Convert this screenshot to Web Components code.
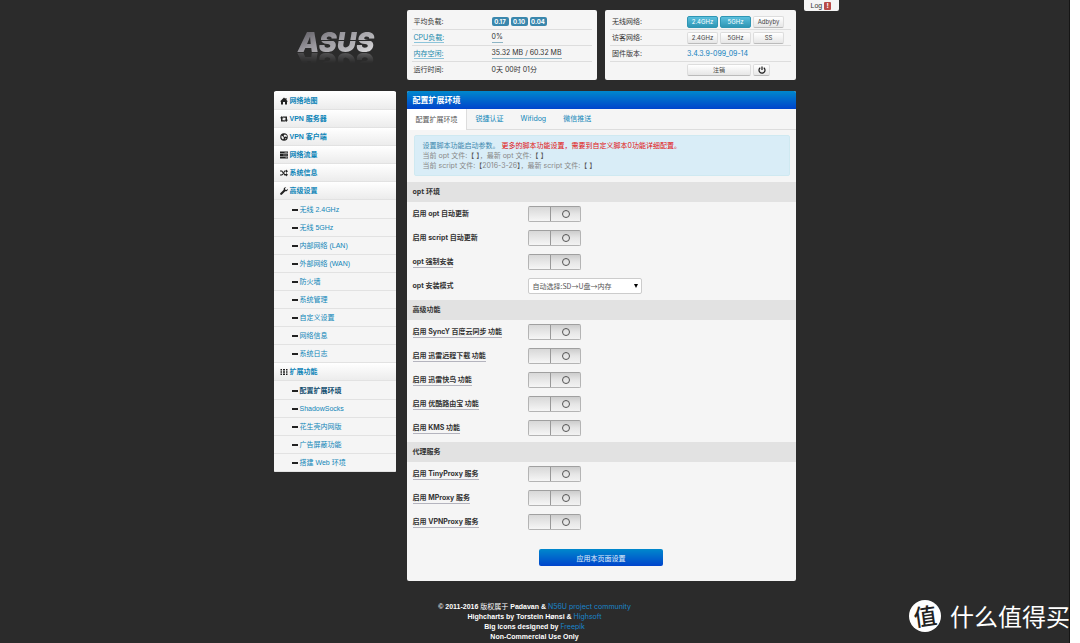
<!DOCTYPE html>
<html lang="zh-CN">
<head>
<meta charset="utf-8">
<title>ASUS Wireless Router - 配置扩展环境</title>
<style>
  html { background: #fff; }
  body { margin: 0; font: 7px/10px "Liberation Sans", "Noto Sans CJK SC", sans-serif; color: #333; }
</style>
</head>
<body>
<router-app></router-app>
<script>
const define = (name, html, setup) => customElements.define(name, class extends HTMLElement {
  connectedCallback() {
    if (this.shadowRoot) return;
    const t = document.createElement('template');
    t.innerHTML = html;
    this.attachShadow({ mode: 'open' }).append(t.content.cloneNode(true));
    if (setup) setup(this, this.shadowRoot);
  }
});

const ICONS = {
  home: '<path d="M8 1 0 9h2v6h4v-5h4v5h4V9h2l-3-3V2h-2v2z"/>',
  retweet: '<path d="M3.500 2 0 6.500h2V13h9L9 10.500H5v-4h2zM5 3h9v6.500h2L12.500 14 9 9.500h2v-4H7z"/>',
  globe: '<circle cx="8" cy="8" r="7.5"/><path fill="#f6f6f6" d="M9 3l4 1 1 4-3-1-2 1-2-2zM3 5l3 2 2 3-2 3-3-3zM10 11l3-1-2 3z"/>',
  tasks: '<path d="M0 1h16v4H0zM0 6h16v4H0zM0 11h16v4H0z"/><path fill="#ccc" d="M9 2.500h6v1H9zM6 7.500h9v1H6zM11 12.500h4v1h-4z"/>',
  random: '<path d="M0 3h4l6 7h2V8l4 3.500-4 3.500v-2H9L3 5H0zM0 11h3l2-2 1.500 2L4 13H0zM9 3h3V1l4 3.500L12 8V5h-2L8.500 8 7 6z"/>',
  wrench: '<path d="M15.500 3.500 13 6l-2.500-.5L10 3l2.500-2.500C9 0 6.500 2.500 7.500 5.500L.5 12.500c-1 2 1 4 3 3l7-7c3 1 5.500-1.500 5-5z"/>',
  th: '<path d="M1 2h3v3H1zM6 2h4v3H6zM12 2h3v3h-3zM1 6.500h3v3H1zM6 6.500h4v3H6zM12 6.500h3v3h-3zM1 11h3v3H1zM6 11h4v3H6zM12 11h3v3h-3z"/>',
  minus: '<path d="M2 6h12v4H2z"/>',
  power: '<path fill="none" stroke="#222" stroke-width="2.500" d="M4.500 3.500a6 6 0 1 0 7 0M8 1v7"/>'
};

define('ui-icon', `
  <style>:host{display:block;width:8px;height:8px;flex:none}svg{display:block;width:100%;height:100%;fill:#222}</style>
  <svg viewBox="0 0 16 16" aria-hidden="true"></svg>`,
  (el, root) => { root.querySelector('svg').innerHTML = ICONS[el.getAttribute('name')]; });

define('brand-logo', `
  <style>
    :host{display:block}
    svg{display:block;width:92px;height:44px;-webkit-box-reflect:below -27px linear-gradient(transparent 45%,rgba(0,0,0,.3) 69%,transparent 70%)}
    text{font:italic 900 27px Inter,sans-serif}
  </style>
  <svg viewBox="0 0 92 44" role="img" aria-label="ASUS">
    <defs><linearGradient id="m" x1="0" x2="1" y1="0" y2="1">
      <stop offset="0" stop-color="#4a484f"/><stop offset=".4" stop-color="#99979d"/>
      <stop offset=".65" stop-color="#b5b4b8"/><stop offset="1" stop-color="#f4f4f4"/>
    </linearGradient></defs>
    <text x="5" y="30" fill="url(#m)">ASUS</text>
    <path stroke="#2b2b2b" d="M23 18.500h62"/>
  </svg>`);

define('info-panel', `
  <style>
    :host{display:block;flex:1;box-sizing:border-box;padding:4px 5px 2px;border-radius:2px;background:#f5f5f5}
  </style><slot></slot>`);

define('info-row', `
  <style>
    :host{display:grid;grid-template-columns:78px 1fr;align-items:center;height:16px;box-sizing:border-box;
      padding-left:2px;border-bottom:1px solid #ddd;font-family:Inter,"Noto Sans CJK SC",sans-serif;font-size:7px}
    :host(:last-child){border-bottom-color:transparent}
    :host([narrow]){grid-template-columns:75px 1fr}
    div{display:flex;gap:2px}
    ::slotted(a){color:#0f7fbd;text-decoration:none}
    ::slotted(a.hint){color:#1689ac;border-bottom:1px solid #8cc4da}
    ::slotted(.dotted){border-bottom:1px solid #8cb4c4}
  </style>
  <span><slot name="label"></slot></span><div><slot></slot></div>`);

define('load-badge', `
  <style>:host{display:block;width:17px;border-radius:2px;background:#3a87ad;color:#fff;text-align:center;font:bold 6px/9px Inter,sans-serif}</style>
  <slot></slot>`);

define('ui-button', `
  <style>
    :host{display:block;width:31px}
    :host([wide]){width:64px}
    :host([small]){width:17px}
    button{display:flex;align-items:center;justify-content:center;box-sizing:border-box;width:100%;height:12px;padding:0;
      border:1px solid #ddd;border-bottom-color:#bbb;border-radius:2px;background:linear-gradient(#fff,#e6e6e6);
      color:#444;font:6px/10px Inter,"Noto Sans CJK SC",sans-serif;white-space:nowrap}
    :host([on]) button{border-color:#2f96b4;background:linear-gradient(#5bc0de,#2f96b4);color:#fff}
  </style>
  <button type="button"><slot></slot></button>`,
  (el, root) => { const l = el.getAttribute('label'); if (l) root.querySelector('button').setAttribute('aria-label', l); });

define('log-tab', `
  <style>
    :host{display:block;position:absolute;top:0;left:calc(100% + 8px)}
    button{display:flex;align-items:center;gap:2px;box-sizing:border-box;width:35px;height:11px;padding:0 0 0 7px;border:0;
      border-radius:0 0 2px 2px;background:#f5f5f5;color:#333;font:7px/9px "Liberation Sans",sans-serif}
    b{width:7px;border-radius:1px;background:#b94a48;color:#fff;line-height:8px}
  </style>
  <button type="button">Log <b>!</b></button>`);

define('nav-item', `
  <style>
    :host{display:block}
    a{display:flex;align-items:center;gap:2px;box-sizing:border-box;height:18px;padding-left:6px;
      border-bottom:1px solid #e2e2e2;background:linear-gradient(#fff,#ececec);
      color:#0f85b8;font-weight:bold;text-decoration:none}
    :host([sub]) a{padding-left:17px;gap:1px;background:#f5f5f5;font-weight:normal}
    :host([current]) a{color:#0f4c6e;font-weight:bold}
  </style>
  <a href="#"><ui-icon></ui-icon><span><slot></slot></span></a>`,
  (el, root) => {
    const icon = document.createElement('ui-icon');
    icon.setAttribute('name', el.getAttribute('icon') || 'minus');
    root.querySelector('ui-icon').replaceWith(icon);
  });

define('nav-group', `<style>:host{display:block;padding-top:1px;background:#f5f5f5}</style><slot></slot>`);

define('side-nav', `
  <style>:host{display:block;overflow:hidden;border-radius:2px}nav{padding-top:1px;background:#fff}</style>
  <nav>
    <nav-item icon="home">网络地图</nav-item>
    <nav-item icon="retweet">VPN 服务器</nav-item>
    <nav-item icon="globe">VPN 客户端</nav-item>
    <nav-item icon="tasks">网络流量</nav-item>
    <nav-item icon="random">系统信息</nav-item>
    <nav-item icon="wrench">高级设置</nav-item>
    <nav-group>
      <nav-item sub>无线 2.4GHz</nav-item>
      <nav-item sub>无线 5GHz</nav-item>
      <nav-item sub>内部网络 (LAN)</nav-item>
      <nav-item sub>外部网络 (WAN)</nav-item>
      <nav-item sub>防火墙</nav-item>
      <nav-item sub>系统管理</nav-item>
      <nav-item sub>自定义设置</nav-item>
      <nav-item sub>网络信息</nav-item>
      <nav-item sub>系统日志</nav-item>
    </nav-group>
    <nav-item icon="th">扩展功能</nav-item>
    <nav-group>
      <nav-item sub current>配置扩展环境</nav-item>
      <nav-item sub>ShadowSocks</nav-item>
      <nav-item sub>花生壳内网版</nav-item>
      <nav-item sub>广告屏蔽功能</nav-item>
      <nav-item sub>搭建 Web 环境</nav-item>
    </nav-group>
  </nav>`);

define('tab-bar', `
  <style>
    :host{display:flex;height:21px;box-sizing:border-box;border-bottom:1px solid #ddd}
    a{display:flex;align-items:center;padding:0 8px 0 9px;color:#0f85b8;text-decoration:none;font-family:Inter,"Noto Sans CJK SC",sans-serif}
    a[aria-current]{margin-bottom:-1px;border-right:1px solid #ddd;background:#fff;color:#555}
  </style>
  <a href="#" aria-current="page">配置扩展环境</a><a href="#">锐捷认证</a><a href="#">Wifidog</a><a href="#">微信推送</a>`);

define('info-alert', `
  <style>
    :host{display:block;margin:5px 6px 6px 7px;padding:5px 8px 4px;border:1px solid #cfe9f1;border-radius:2px;background:#d9edf7;
      color:#3a87ad;font-family:Inter,"Noto Sans CJK SC",sans-serif}
    p{margin:0}.more{color:#e01010}.file{color:#888}.file b{color:#555;font-weight:normal}
  </style>
  <p>设置脚本功能启动参数。 <span class="more">更多的脚本功能设置，需要到自定义脚本0功能详细配置。</span></p>
  <p class="file">当前 opt 文件:<b>【 】</b>，最新 opt 文件:<b>【 】</b></p>
  <p class="file">当前 script 文件:<b>【</b>2016-3-26<b>】</b>，最新 script 文件:<b>【 】</b></p>`);

define('form-section', `
  <style>
    :host{display:block;padding-bottom:2px}
    h2{margin:0;padding-left:6px;background:#e2e2e2;color:#333;font:bold 7px/20px "Open Sans","Noto Sans CJK SC",sans-serif}
  </style>
  <h2></h2><slot></slot>`,
  (el, root) => { root.querySelector('h2').textContent = el.getAttribute('heading'); });

const ROW = `
    :host{display:grid;grid-template-columns:115px 1fr;align-items:center;height:24px;padding-left:6px}
    label{justify-self:start;border-bottom:1px solid transparent;color:#333;font:bold 7px/10px Inter,"Noto Sans CJK SC",sans-serif;white-space:nowrap}
    :host([hint]) label{border-bottom-color:#b4b4be}`;

define('toggle-row', `
  <style>${ROW}
    input{appearance:none;position:relative;width:53px;height:16px;margin:0;box-sizing:border-box;border:1px solid #b4b4b4;border-top-color:#a0a0a0;border-radius:2px;
      background:linear-gradient(#ccc,#e6e6e6 50%,#f2f2f2)}
    input::before{content:"";position:absolute;inset:0 auto 0 0;width:21px;border-right:1px solid #999;border-radius:1px 0 0 1px;background:linear-gradient(#d8d8d8,#f6f6f6)}
    input::after{content:"";position:absolute;top:3px;right:10px;width:6px;height:6px;border:1px solid #555;border-radius:50%}
    input:checked::before{left:auto;right:0;border-right:0;border-left:1px solid #999}
    input:checked::after{right:auto;left:10px}
  </style>
  <label for="t"><slot></slot></label><input type="checkbox" role="switch" id="t">`);

define('select-row', `
  <style>${ROW}
    div{position:relative;width:114px}
    select{appearance:none;display:block;box-sizing:border-box;width:100%;height:16px;margin:0;padding:0 4px;border:1px solid #ccc;border-radius:2px;
      background:#fff;color:#555;font:7px/14px "Noto Sans CJK SC",sans-serif}
    svg{position:absolute;right:4px;top:6px;width:4px;height:4px;pointer-events:none}
  </style>
  <label for="s"><slot></slot></label>
  <div><select id="s"><option>自动选择:SD→U盘→内存</option></select>
  <svg viewBox="0 0 4 4" aria-hidden="true"><path d="M0 0h4L2 4z"/></svg></div>`);

define('config-panel', `
  <style>
    :host{display:block;overflow:hidden;border-radius:2px;background:#f5f5f5}
    h1{margin:0;padding-left:6px;background:linear-gradient(#08c,#04c);color:#fff;font:bold 8px/18px "Noto Sans CJK SC",sans-serif}
    .actions{display:flex;justify-content:center;padding:13px 0 15px}
    .apply{width:124px;height:17px;padding:0;border:0;border-radius:2px;background:linear-gradient(#08c,#04c);
      color:#e4f1fb;font:7px/16px "Noto Sans CJK SC",sans-serif}
  </style>
  <h1>配置扩展环境</h1>
  <tab-bar></tab-bar>
  <info-alert></info-alert>
  <form-section heading="opt 环境">
    <toggle-row>启用 opt 自动更新</toggle-row>
    <toggle-row>启用 script 自动更新</toggle-row>
    <toggle-row hint>opt 强制安装</toggle-row>
    <select-row>opt 安装模式</select-row>
  </form-section>
  <form-section heading="高级功能">
    <toggle-row hint>启用 SyncY 百度云同步 功能</toggle-row>
    <toggle-row hint>启用 迅雷远程下载 功能</toggle-row>
    <toggle-row hint>启用 迅雷快鸟 功能</toggle-row>
    <toggle-row hint>启用 优酷路由宝 功能</toggle-row>
    <toggle-row hint>启用 KMS 功能</toggle-row>
  </form-section>
  <form-section heading="代理服务">
    <toggle-row hint>启用 TinyProxy 服务</toggle-row>
    <toggle-row hint>启用 MProxy 服务</toggle-row>
    <toggle-row hint>启用 VPNProxy 服务</toggle-row>
  </form-section>
  <div class="actions"><button class="apply" type="button">应用本页面设置</button></div>`);

define('page-footer', `
  <style>
    :host{display:block;padding-top:21px;color:#fff;font-weight:bold;text-align:center}
    p{margin:0}a{color:#1a86cc;font-weight:normal;text-decoration:none;font-family:Inter,sans-serif}span{font-weight:normal}
  </style>
  <p>© 2011-2016 <span>版权属于</span> Padavan &amp; <a href="#">N56U project community</a></p>
  <p>Highcharts by Torstein Hønsi &amp; <a href="#">Highsoft</a></p>
  <p>Big icons designed by <a href="#">Freepik</a></p>
  <p>Non-Commercial Use Only</p>`);

define('site-mark', `
  <style>
    :host{display:flex;align-items:center;gap:9px;position:absolute;right:-1px;bottom:10px;color:#fff;
      font:24px/34px "Noto Sans CJK SC",sans-serif}
    i{width:32px;height:32px;border-radius:50%;background:#fff;color:#222;font:500 23px/31px "Noto Sans CJK SC",sans-serif;text-align:center}
    i span{display:block;transform:rotate(-8deg)}
  </style>
  <i><span>值</span></i><span>什么值得买</span>`);

define('router-app', `
  <style>
    :host{display:block;position:relative;box-sizing:border-box;min-height:100vh;margin-right:10px;
      border-right:1px solid #151515;background:#2b2b2b}
    .page{position:relative;width:522px;max-width:100%;margin:0 auto;padding-top:10px}
    .grid{display:grid;grid-template-columns:122px 1fr;gap:11px;align-items:start}
    .brand{padding:12px 0 0 19px}
    .panels{display:flex;gap:8px}
  </style>
  <div class="page">
    <log-tab></log-tab>
    <div class="grid">
      <div class="brand"><brand-logo></brand-logo></div>
      <div class="panels">
        <info-panel>
          <info-row><span slot="label">平均负载:</span><load-badge>0.17</load-badge><load-badge>0.10</load-badge><load-badge>0.04</load-badge></info-row>
          <info-row><a slot="label" class="hint" href="#">CPU负载:</a><span class="dotted">0%</span></info-row>
          <info-row><a slot="label" class="hint" href="#">内存空闲:</a><span class="dotted">35.32 MB / 60.32 MB</span></info-row>
          <info-row><span slot="label">运行时间:</span><span>0天 00时 01分</span></info-row>
        </info-panel>
        <info-panel>
          <info-row narrow><span slot="label">无线网络:</span><ui-button on>2.4GHz</ui-button><ui-button on>5GHz</ui-button><ui-button>Adbyby</ui-button></info-row>
          <info-row narrow><span slot="label">访客网络:</span><ui-button>2.4GHz</ui-button><ui-button>5GHz</ui-button><ui-button>SS</ui-button></info-row>
          <info-row narrow><span slot="label">固件版本:</span><a href="#">3.4.3.9-099_09-14</a></info-row>
          <info-row narrow><ui-button wide>注销</ui-button><ui-button small label="电源"><ui-icon name="power"></ui-icon></ui-button></info-row>
        </info-panel>
      </div>
      <side-nav></side-nav>
      <config-panel></config-panel>
    </div>
    <page-footer></page-footer>
  </div>
  <site-mark></site-mark>`);
</script>
</body>
</html>
